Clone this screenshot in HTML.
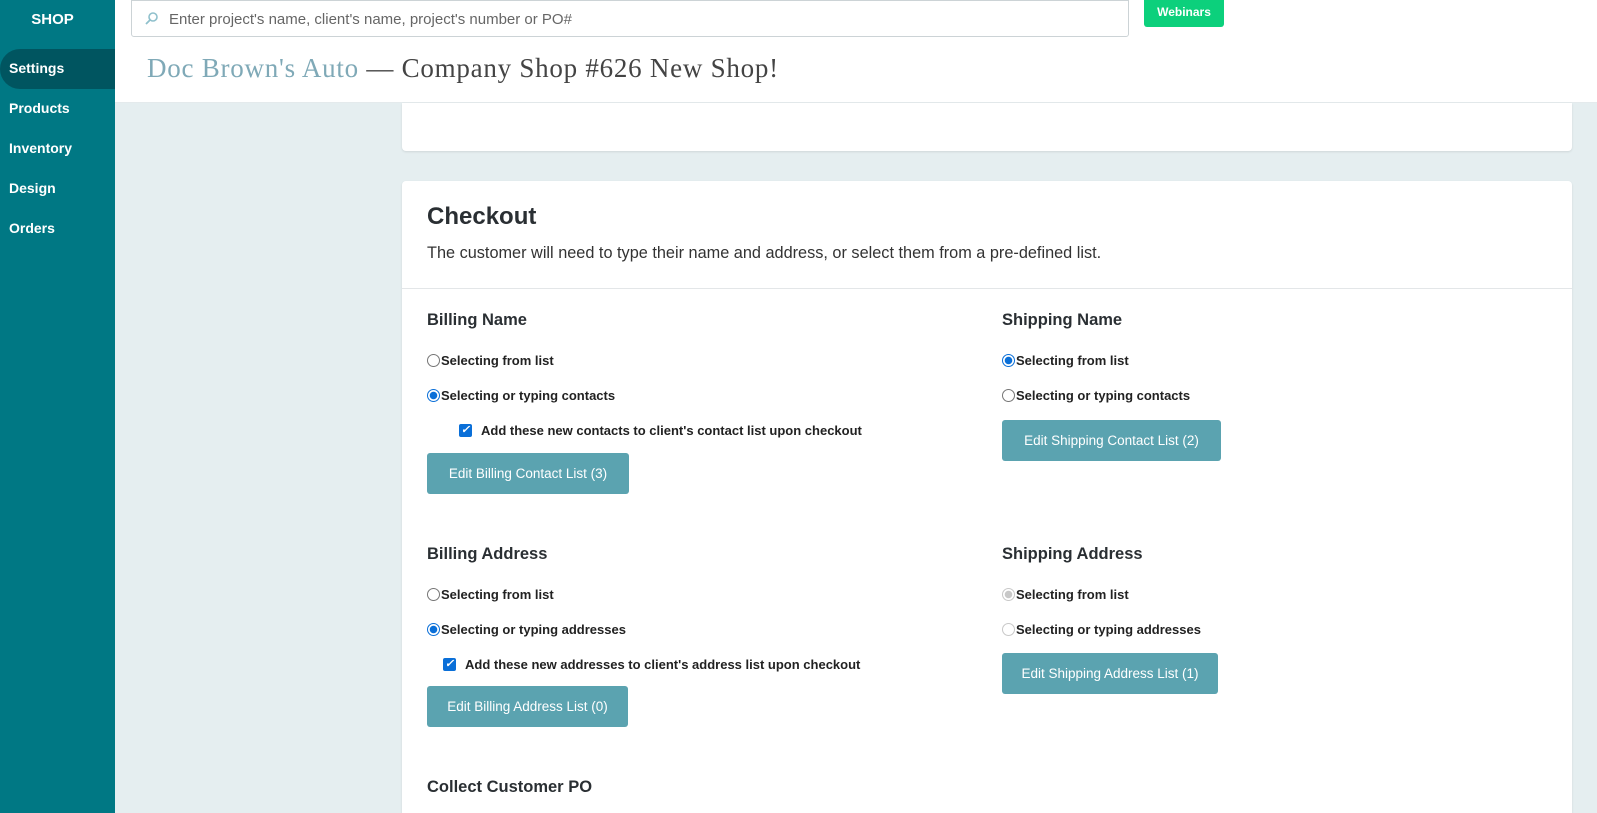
<!DOCTYPE html>
<html><head><style>
*{box-sizing:border-box;margin:0;padding:0}
html,body{width:1597px;height:813px;overflow:hidden}
body{background:#e5eef0;font-family:"Liberation Sans",sans-serif;position:relative;color:#222}
.side{position:absolute;left:0;top:0;width:115px;height:813px;background:#007884}
.side .logo{position:absolute;top:11px;left:0;width:105px;text-align:center;color:#fff;font-weight:bold;font-size:15px}
.side .it{position:absolute;left:9px;color:#fff;font-weight:bold;font-size:14px}
.side .act{position:absolute;left:0;top:49px;width:115px;height:40px;background:#005560;border-radius:20px 0 0 20px}
.hdr{position:absolute;left:115px;top:0;width:1482px;height:103px;background:#fff;border-bottom:1px solid #e4eaec}
.search{position:absolute;left:131px;top:0;width:998px;height:37px;border:1px solid #ccd3d6;border-radius:0 0 3px 3px;background:#fff}
.search span{position:absolute;left:37px;top:10px;font-size:15px;color:#666}
.web{position:absolute;left:1144px;top:0;width:80px;height:27px;background:#0cd07c;border-radius:0 0 3px 3px;color:#fff;font-weight:bold;font-size:12px;text-align:center;line-height:25px}
.title{position:absolute;left:147px;top:53px;font-family:"Liberation Serif",serif;font-size:27px;color:#444;letter-spacing:0.75px}
.title .a{color:#7fa9b7}
.card{position:absolute;left:402px;width:1170px;background:#fff;border-radius:4px;box-shadow:0 1px 2px rgba(0,0,0,.1)}
.h{position:absolute;font-weight:bold;font-size:16.5px;color:#2a2f33}
.r{position:absolute;font-weight:bold;font-size:13px;color:#222;display:flex;align-items:center}
.rad{width:13px;height:13px;border:1px solid #767676;border-radius:50%;display:inline-block;margin-right:1px;background:#fff}
.rad.on{border:1px solid #0a6fd8;background:radial-gradient(circle,#0a6fd8 3.5px,#fff 4px)}
.rad.dis{border-color:#c8c8c8}
.rad.dison{border-color:#c8c8c8;background:radial-gradient(circle,#c8c8c8 3.5px,#fff 4px)}
.cb{width:13px;height:13px;background:#0a6fd8;border-radius:2px;display:inline-block;margin-right:9px;color:#fff;font-size:11px;line-height:13px;text-align:center}
.btn{position:absolute;height:41px;background:#5ba3b0;border-radius:3px;color:#fff;font-size:13.5px;line-height:41px;text-align:center}
</style></head><body>
<div class="side">
<div class="logo">SHOP</div>
<div class="act"></div>
<div class="it" style="top:60px">Settings</div>
<div class="it" style="top:100px">Products</div>
<div class="it" style="top:140px">Inventory</div>
<div class="it" style="top:180px">Design</div>
<div class="it" style="top:220px">Orders</div>
</div>
<div class="hdr"></div>
<div class="search"><svg style="position:absolute;left:13px;top:11px" width="13" height="13" viewBox="0 0 13 13"><circle cx="8" cy="5" r="4" fill="none" stroke="#8fc0cc" stroke-width="1.6"/><path d="M5 8 L1 12" stroke="#8fc0cc" stroke-width="1.8"/></svg><span>Enter project's name, client's name, project's number or PO#</span></div>
<div class="web">Webinars</div>
<div class="title"><span class="a">Doc Brown's Auto</span> — Company Shop #626 New Shop!</div>
<div class="card" style="top:103px;height:48px;border-radius:0 0 4px 4px"></div>
<div class="card" style="top:181px;height:632px;border-radius:4px 4px 0 0">
<div style="position:absolute;left:25px;top:22px;font-size:24px;font-weight:bold;color:#2a2f33">Checkout</div>
<div style="position:absolute;left:25px;top:63px;font-size:16.3px;color:#333">The customer will need to type their name and address, or select them from a pre-defined list.</div>
<div style="position:absolute;left:0;top:107px;width:100%;border-top:1px solid #e3e6e8"></div>
</div>
<div class="h" style="left:427px;top:311px">Billing Name</div>
<div class="r" style="left:427px;top:353px"><i class="rad"></i>Selecting from list</div>
<div class="r" style="left:427px;top:388px"><i class="rad on"></i>Selecting or typing contacts</div>
<div class="r" style="left:459px;top:423px"><i class="cb">✓</i>Add these new contacts to client's contact list upon checkout</div>
<div class="btn" style="left:427px;top:453px;width:202px">Edit Billing Contact List (3)</div>
<div class="h" style="left:1002px;top:311px">Shipping Name</div>
<div class="r" style="left:1002px;top:353px"><i class="rad on"></i>Selecting from list</div>
<div class="r" style="left:1002px;top:388px"><i class="rad"></i>Selecting or typing contacts</div>
<div class="btn" style="left:1002px;top:420px;width:219px">Edit Shipping Contact List (2)</div>
<div class="h" style="left:427px;top:545px">Billing Address</div>
<div class="r" style="left:427px;top:587px"><i class="rad"></i>Selecting from list</div>
<div class="r" style="left:427px;top:622px"><i class="rad on"></i>Selecting or typing addresses</div>
<div class="r" style="left:443px;top:657px"><i class="cb">✓</i>Add these new addresses to client's address list upon checkout</div>
<div class="btn" style="left:427px;top:686px;width:201px">Edit Billing Address List (0)</div>
<div class="h" style="left:1002px;top:545px">Shipping Address</div>
<div class="r" style="left:1002px;top:587px"><i class="rad dison"></i>Selecting from list</div>
<div class="r" style="left:1002px;top:622px"><i class="rad dis"></i>Selecting or typing addresses</div>
<div class="btn" style="left:1002px;top:653px;width:216px">Edit Shipping Address List (1)</div>
<div class="h" style="left:427px;top:778px">Collect Customer PO</div>
</body></html>
